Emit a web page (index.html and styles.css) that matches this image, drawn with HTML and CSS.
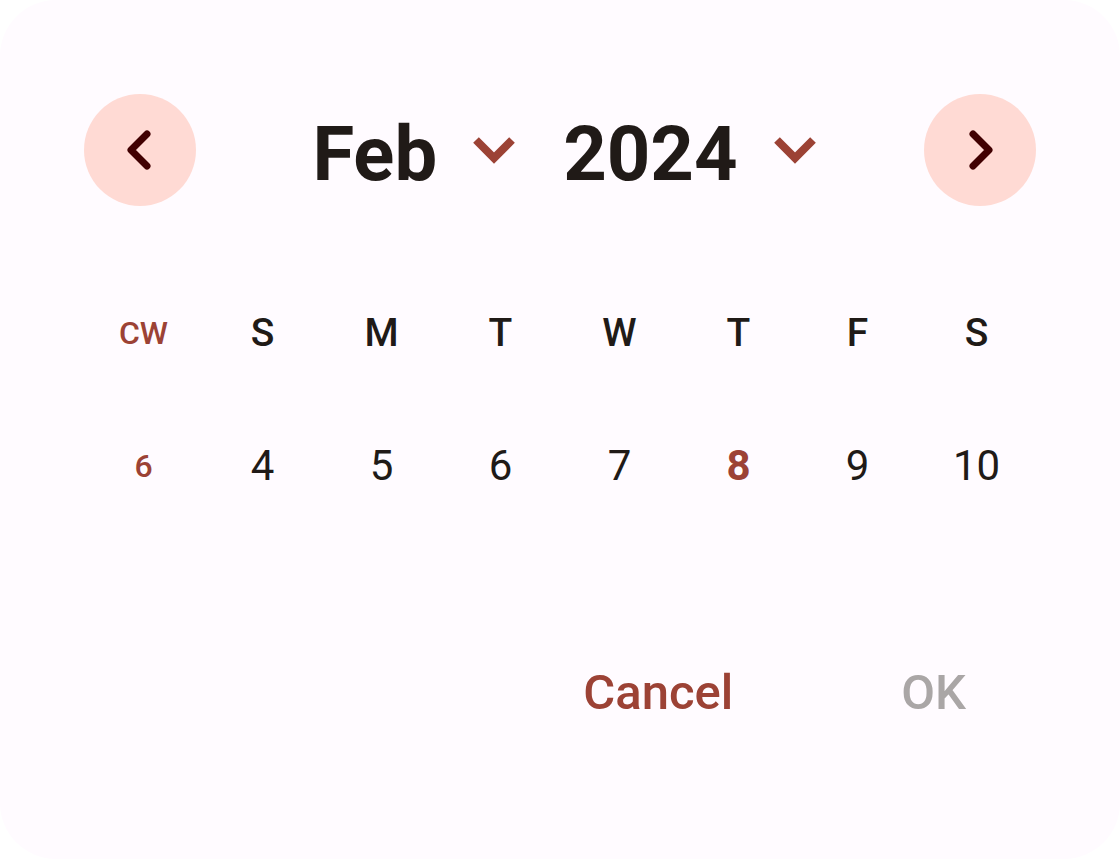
FILE: index.html
```html
<!DOCTYPE html>
<html lang="en">
<head>
<meta charset="utf-8">
<meta name="viewport" content="width=device-width, initial-scale=1">
<title>Date picker</title>
<link rel="stylesheet" href="styles.css">
</head>
<body>
<main class="dialog">
  <header class="header">
    <button class="nav" type="button" aria-label="Previous week">
      <svg class="nav-icon" viewBox="0 0 56 56" aria-hidden="true"><path d="M35 12 19 28 35 44"/></svg>
    </button>
    <div class="selectors">
      <button class="selector" type="button" aria-haspopup="listbox">Feb
        <svg class="chevron" viewBox="0 0 42 28" aria-hidden="true"><path d="M3 4 21 22 39 4"/></svg>
      </button>
      <button class="selector" type="button" aria-haspopup="listbox">2024
        <svg class="chevron" viewBox="0 0 42 28" aria-hidden="true"><path d="M3 4 21 22 39 4"/></svg>
      </button>
    </div>
    <button class="nav" type="button" aria-label="Next week">
      <svg class="nav-icon" viewBox="0 0 56 56" aria-hidden="true"><path d="M21 12 37 28 21 44"/></svg>
    </button>
  </header>
  <table class="week">
    <thead>
      <tr><th class="cw" scope="col">CW</th><th scope="col">S</th><th scope="col">M</th><th scope="col">T</th><th scope="col">W</th><th scope="col">T</th><th scope="col">F</th><th scope="col">S</th></tr>
    </thead>
    <tbody>
      <tr><th class="cw" scope="row">6</th><td><button class="day" type="button">4</button></td><td><button class="day" type="button">5</button></td><td><button class="day" type="button">6</button></td><td><button class="day" type="button">7</button></td><td><button class="day today" type="button" aria-current="date">8</button></td><td><button class="day" type="button">9</button></td><td><button class="day" type="button">10</button></td></tr>
    </tbody>
  </table>
  <footer class="actions">
    <button class="action" type="button">Cancel</button>
    <button class="action ok" type="button" disabled>OK</button>
  </footer>
</main>
</body>
</html>
```
FILE: styles.css
```css
* { box-sizing: border-box; }
body { margin: 0; background: #fff; font-family: Roboto, sans-serif; color: #201a17; }
button { border: 0; padding: 0; background: none; font: inherit; color: inherit; cursor: pointer; }
.dialog { min-height: 100vh; padding: 94px 84px 70px; border-radius: 56px; background: #fffbff; }
.header { display: flex; align-items: center; justify-content: space-between; }
.nav { display: grid; place-items: center; width: 112px; height: 112px; border-radius: 50%; background: #ffdad4; }
.nav-icon { width: 56px; height: 56px; fill: none; stroke: #410001; stroke-width: 7; stroke-linecap: round; stroke-linejoin: round; }
.selectors { display: flex; gap: 48px; padding-left: 8px; }
.selector { display: flex; align-items: center; gap: 36px; padding-top: 8px; font-size: 76px; line-height: 96px; font-weight: 700; }
.chevron { width: 42px; height: 28px; margin-bottom: 8px; fill: none; stroke: #9c4235; stroke-width: 8; }
.week { width: 100%; margin-top: 71px; table-layout: fixed; border-collapse: collapse; text-align: center; }
.week th, .week td { padding: 0; height: 112px; }
.week tbody th, .week tbody td { height: 154px; }
.week th { font-size: 39px; font-weight: 500; }
.week .cw { font-size: 32px; color: #9c4235; }
.day { width: 100%; font-size: 42px; line-height: 84px; }
.today { color: #9c4235; font-weight: 700; }
.actions { display: flex; justify-content: flex-end; margin-top: 94px; padding-right: 14px; gap: 56px; }
.action { padding: 0 56px; font-size: 49px; line-height: 112px; font-weight: 500; color: #9c4235; }
.ok { color: #aaa6a6; cursor: default; }
```
